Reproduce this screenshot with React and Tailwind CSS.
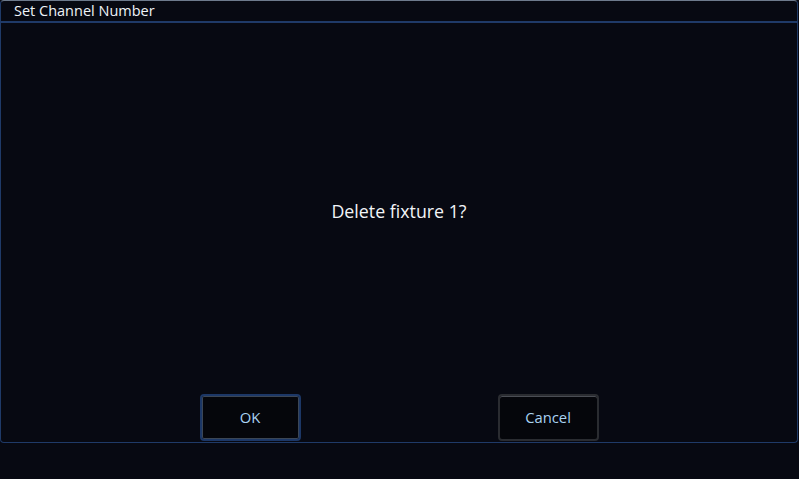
import React from "react";

export default function App() {
  return (
    <div
      className="w-[799px] h-[479px] bg-[#070912] overflow-hidden"
      style={{ fontFamily: '"Open Sans", "Noto Sans", sans-serif' }}
    >
      <div className="w-[798px] h-[443px] flex flex-col rounded-[4px] border border-[#1f3a68] border-t-[#6d7a8c] bg-[#070912]">
        <div className="h-[22px] border-b-2 border-[#1f3a68] pl-[13px] text-[14.5px] leading-[20px] text-[#eef3f8]">
          Set Channel Number
        </div>
        <div className="pt-[176px] text-center text-[17.8px] leading-[24px] text-[#f2f5f8]">
          Delete fixture 1?
        </div>
        <div className="mt-auto mb-[1px] flex justify-center gap-[197px]">
          <button className="w-[101px] h-[47px] rounded-[4px] border-2 border-[#1c3766] shadow-[inset_0_0_0_1px_#3b4656] bg-[#05060b] text-[14.8px] text-[#a9d2f2]">
            OK
          </button>
          <button className="w-[101px] h-[47px] rounded-[4px] border-2 border-[#2a2c31] shadow-[inset_0_1px_0_0_#4a4d54] bg-[#05060b] text-[14.8px] text-[#a9d2f2]">
            Cancel
          </button>
        </div>
      </div>
    </div>
  );
}
